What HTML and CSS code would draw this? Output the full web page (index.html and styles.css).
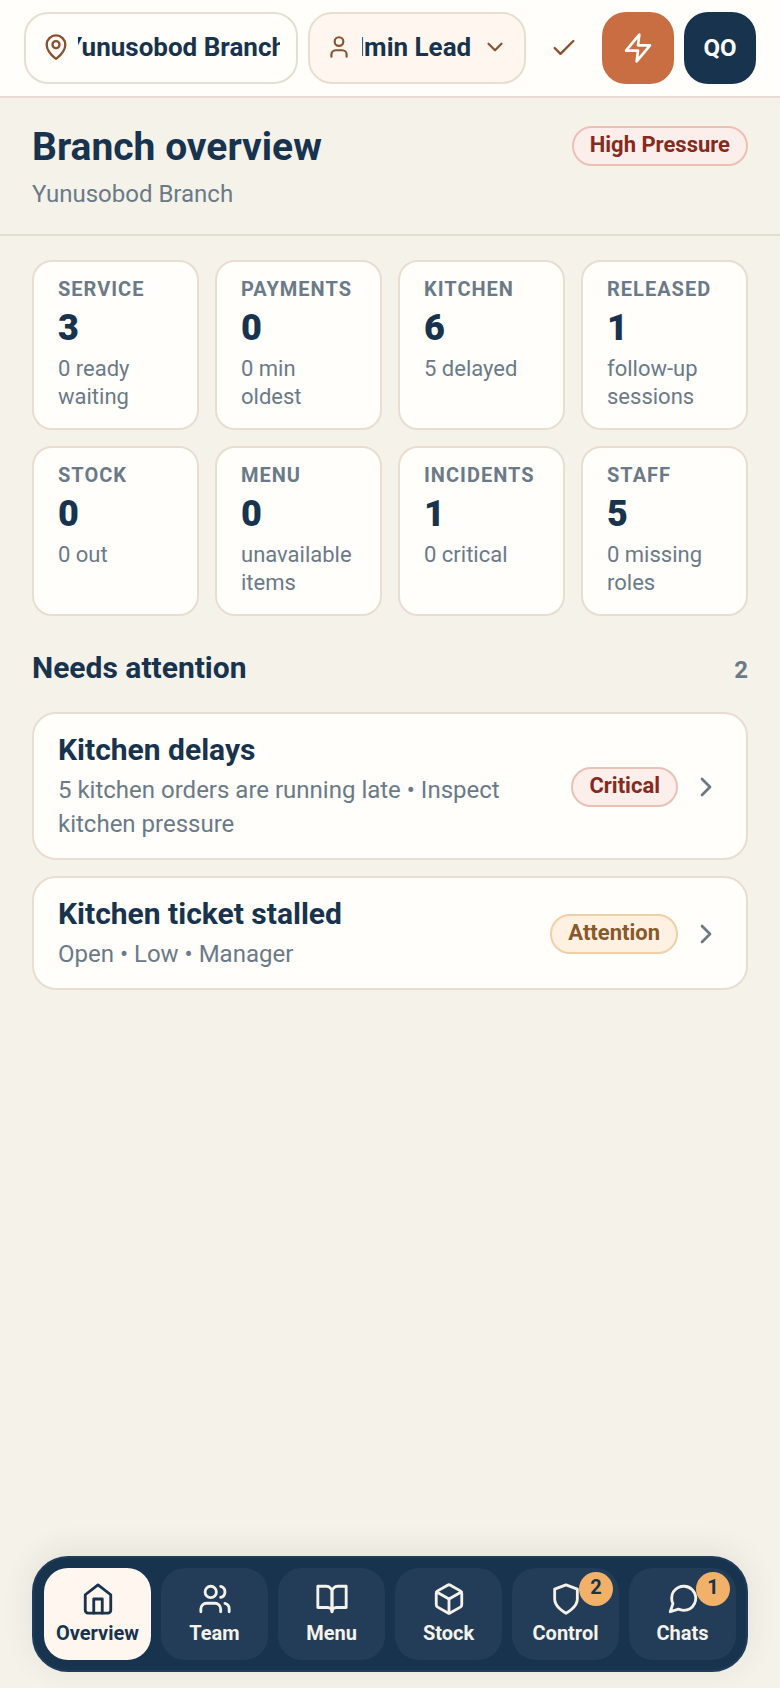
FILE: index.html
```html
<!DOCTYPE html>
<html lang="en">
<head>
<meta charset="utf-8">
<meta name="viewport" content="width=device-width, initial-scale=1">
<title>Branch overview</title>
<link rel="stylesheet" href="styles.css">
</head>
<body>
<header class="topbar">
  <button type="button" class="picker picker-branch">
    <svg class="icon icon-pin" viewBox="0 0 24 24" aria-hidden="true"><path d="M20 10c0 4.99-5.54 10.19-7.4 11.8a1 1 0 0 1-1.2 0C9.54 20.19 4 14.99 4 10a8 8 0 0 1 16 0"/><circle cx="12" cy="10" r="3"/></svg>
    <span class="picker-window picker-window-center"><span class="picker-text">Yunusobod Branch</span></span>
  </button>
  <div class="picker picker-role">
    <svg class="icon icon-user" viewBox="0 0 24 24" aria-hidden="true"><path d="M19 21v-2a4 4 0 0 0-4-4H9a4 4 0 0 0-4 4v2"/><circle cx="12" cy="7" r="4"/></svg>
    <span class="picker-window picker-window-end">
      <select class="picker-text picker-select" aria-label="Role"><option>Admin Lead</option></select>
    </span>
    <svg class="icon icon-user" viewBox="0 0 24 24" aria-hidden="true"><path d="m6 9 6 6 6-6"/></svg>
  </div>
  <button type="button" class="apply" aria-label="Apply">
    <svg class="icon icon-check" viewBox="0 0 24 24" aria-hidden="true"><path d="M20 6 9 17l-5-5"/></svg>
  </button>
  <button type="button" class="tile tile-action" aria-label="Quick actions">
    <svg class="icon icon-zap" viewBox="0 0 24 24" aria-hidden="true"><path d="M13 2 3 14h9l-1 8 10-12h-9z"/></svg>
  </button>
  <button type="button" class="tile tile-user">QO</button>
</header>

<section class="page-head">
  <div>
    <h1 class="page-title">Branch overview</h1>
    <p class="page-sub">Yunusobod Branch</p>
  </div>
  <span class="badge badge-critical">High Pressure</span>
</section>

<main class="content">
  <section class="stats" aria-label="Branch figures">
    <article class="stat"><h2 class="stat-label">Service</h2><p class="stat-value">3</p><p class="stat-note">0 ready waiting</p></article>
    <article class="stat"><h2 class="stat-label">Payments</h2><p class="stat-value">0</p><p class="stat-note">0 min oldest</p></article>
    <article class="stat"><h2 class="stat-label">Kitchen</h2><p class="stat-value">6</p><p class="stat-note">5 delayed</p></article>
    <article class="stat"><h2 class="stat-label">Released</h2><p class="stat-value">1</p><p class="stat-note">follow-up sessions</p></article>
    <article class="stat"><h2 class="stat-label">Stock</h2><p class="stat-value">0</p><p class="stat-note">0 out</p></article>
    <article class="stat"><h2 class="stat-label">Menu</h2><p class="stat-value">0</p><p class="stat-note">unavailable items</p></article>
    <article class="stat"><h2 class="stat-label">Incidents</h2><p class="stat-value">1</p><p class="stat-note">0 critical</p></article>
    <article class="stat"><h2 class="stat-label">Staff</h2><p class="stat-value">5</p><p class="stat-note">0 missing roles</p></article>
  </section>

  <section class="attention">
    <div class="section-head">
      <h2 class="section-title">Needs attention</h2>
      <span class="section-count">2</span>
    </div>
    <a class="alert" href="#kitchen-delays">
      <span class="alert-body">
        <span class="alert-title">Kitchen delays</span>
        <span class="alert-text">5 kitchen orders are running late • Inspect kitchen pressure</span>
      </span>
      <span class="badge badge-critical">Critical</span>
      <svg class="icon icon-chevron" viewBox="0 0 24 24" aria-hidden="true"><path d="m9 18 6-6-6-6"/></svg>
    </a>
    <a class="alert" href="#kitchen-ticket">
      <span class="alert-body">
        <span class="alert-title">Kitchen ticket stalled</span>
        <span class="alert-text">Open • Low • Manager</span>
      </span>
      <span class="badge badge-attention">Attention</span>
      <svg class="icon icon-chevron" viewBox="0 0 24 24" aria-hidden="true"><path d="m9 18 6-6-6-6"/></svg>
    </a>
  </section>
</main>

<nav class="tabs" aria-label="Main">
  <a class="tab tab-active" href="#overview" aria-current="page">
    <svg class="icon icon-tab" viewBox="0 0 24 24" aria-hidden="true"><path d="m3 9 9-7 9 7v11a2 2 0 0 1-2 2H5a2 2 0 0 1-2-2z"/><path d="M9 22V12h6v10"/></svg>
    Overview
  </a>
  <a class="tab" href="#team">
    <svg class="icon icon-tab" viewBox="0 0 24 24" aria-hidden="true"><path d="M16 21v-2a4 4 0 0 0-4-4H6a4 4 0 0 0-4 4v2"/><circle cx="9" cy="7" r="4"/><path d="M22 21v-2a4 4 0 0 0-3-3.87"/><path d="M16 3.13a4 4 0 0 1 0 7.75"/></svg>
    Team
  </a>
  <a class="tab" href="#menu">
    <svg class="icon icon-tab" viewBox="0 0 24 24" aria-hidden="true"><path d="M2 3h6a4 4 0 0 1 4 4v14a3 3 0 0 0-3-3H2z"/><path d="M22 3h-6a4 4 0 0 0-4 4v14a3 3 0 0 1 3-3h7z"/></svg>
    Menu
  </a>
  <a class="tab" href="#stock">
    <svg class="icon icon-tab" viewBox="0 0 24 24" aria-hidden="true"><path d="M21 8a2 2 0 0 0-1-1.73l-7-4a2 2 0 0 0-2 0l-7 4A2 2 0 0 0 3 8v8a2 2 0 0 0 1 1.73l7 4a2 2 0 0 0 2 0l7-4A2 2 0 0 0 21 16z"/><path d="m3.3 7 8.7 5 8.7-5"/><path d="M12 22V12"/></svg>
    Stock
  </a>
  <a class="tab" href="#control">
    <svg class="icon icon-tab" viewBox="0 0 24 24" aria-hidden="true"><path d="M12 22s8-4 8-10V5l-8-3-8 3v7c0 6 8 10 8 10"/></svg>
    Control
    <span class="tab-count">2</span>
  </a>
  <a class="tab" href="#chats">
    <svg class="icon icon-tab" viewBox="0 0 24 24" aria-hidden="true"><path d="M21 11.5a8.38 8.38 0 0 1-.9 3.8 8.5 8.5 0 0 1-7.6 4.7 8.38 8.38 0 0 1-3.8-.9L3 21l1.9-5.7a8.38 8.38 0 0 1-.9-3.8 8.5 8.5 0 0 1 4.7-7.6 8.38 8.38 0 0 1 3.8-.9h.5a8.48 8.48 0 0 1 8 8z"/></svg>
    Chats
    <span class="tab-count">1</span>
  </a>
</nav>
</body>
</html>
```
FILE: styles.css
```css
:root {
  --navy: #18334e;
  --muted: #6b7a88;
  --paper: #fffefb;
  --cream: #fff7ef;
  --page: #f5f2ea;
  --line: #e9ddd0;
  --brown: #885230;
}

* { box-sizing: border-box; }

body {
  display: flex;
  flex-direction: column;
  min-height: 100vh;
  margin: 0;
  background: var(--page);
  color: var(--navy);
  font-family: Roboto, "Liberation Sans", sans-serif;
}

h1, h2, p { margin: 0; }

a { color: inherit; text-decoration: none; }

button, select {
  margin: 0;
  padding: 0;
  border: 0;
  background: none;
  color: inherit;
  font: inherit;
}

.icon {
  flex: none;
  fill: none;
  stroke: currentColor;
  stroke-width: 2;
  stroke-linecap: round;
  stroke-linejoin: round;
}
.icon-pin, .icon-check { width: 28px; height: 28px; }
.icon-user { width: 26px; height: 26px; }
.icon-zap, .icon-chevron { width: 32px; height: 32px; }
.icon-tab { width: 34px; height: 34px; }
.icon-chevron { color: var(--muted); }

/* Top bar */
.topbar {
  display: flex;
  align-items: center;
  gap: 10px;
  padding: 12px 24px;
  border-bottom: 2px solid #e9dbd4;
  background: var(--paper);
}

.picker {
  display: flex;
  align-items: center;
  min-width: 0;
  height: 72px;
  padding: 0 16px 2px;
  border: 2px solid var(--line);
  border-radius: 24px;
  color: var(--brown);
}
.picker-branch { flex: 238 1 0; gap: 8px; background: var(--paper); }
.picker-role { flex: 182 1 0; gap: 10px; background: var(--cream); }

.picker-window {
  display: flex;
  flex: 1;
  min-width: 0;
  overflow: hidden;
}
.picker-window-center { justify-content: center; padding-right: 6px; }
.picker-window-end { justify-content: flex-end; }

.picker-text {
  flex: none;
  color: var(--navy);
  font-size: 26px;
  font-weight: 700;
  line-height: 32px;
  white-space: nowrap;
}
.picker-select { appearance: none; }

.apply {
  display: grid;
  place-items: center;
  width: 56px;
  height: 72px;
  color: var(--brown);
}

.tile {
  display: grid;
  place-items: center;
  width: 72px;
  height: 72px;
  border-radius: 24px;
  color: var(--paper);
  font-size: 24px;
  font-weight: 700;
}
.tile-action { background: #c96d42; }
.tile-user { background: var(--navy); }

/* Page heading */
.page-head {
  display: flex;
  align-items: flex-start;
  justify-content: space-between;
  padding: 28px 32px 22px;
  border-bottom: 2px solid #e4ded1;
}
.page-title { font-size: 39px; font-weight: 700; line-height: 42px; }
.page-sub {
  margin-top: 8px;
  color: var(--muted);
  font-size: 24px;
  line-height: 36px;
}

.badge {
  flex: none;
  height: 40px;
  padding: 0 16px;
  border: 2px solid;
  border-radius: 20px;
  font-size: 22px;
  font-weight: 700;
  line-height: 34px;
}
.badge-critical { border-color: #ecc0b5; background: #fceeea; color: #862a20; }
.badge-attention { border-color: #f0d0a6; background: #fff1e2; color: #87592b; }

/* Figures */
.content { padding: 24px 32px; }

.stats {
  display: grid;
  grid-template-columns: repeat(4, minmax(0, 1fr));
  gap: 16px;
}
.stat {
  display: flex;
  flex-direction: column;
  gap: 3px;
  min-height: 170px;
  padding: 15px 24px;
  border: 2px solid var(--line);
  border-radius: 20px;
  background: var(--paper);
}
.stat-label {
  color: var(--muted);
  font-size: 20px;
  font-weight: 700;
  letter-spacing: 1px;
  line-height: 24px;
  text-transform: uppercase;
}
.stat-value { font-size: 36px; font-weight: 900; line-height: 48px; }
.stat-note { color: var(--muted); font-size: 22px; line-height: 28px; }

/* Alerts */
.attention {
  display: flex;
  flex-direction: column;
  gap: 16px;
  margin-top: 32px;
}
.section-head {
  display: flex;
  align-items: baseline;
  justify-content: space-between;
  margin-bottom: 8px;
}
.section-title { font-size: 30px; font-weight: 700; line-height: 40px; }
.section-count { color: var(--muted); font-size: 24px; font-weight: 700; }

.alert {
  display: flex;
  align-items: center;
  gap: 12px;
  padding: 18px 24px 17px;
  border: 2px solid var(--line);
  border-radius: 24px;
  background: var(--paper);
}
.alert-body {
  display: flex;
  flex: 1;
  flex-direction: column;
  gap: 5px;
}
.alert-title { font-size: 30px; font-weight: 700; line-height: 36px; }
.alert-text { color: var(--muted); font-size: 24px; line-height: 34px; }

/* Bottom tabs */
.tabs {
  display: grid;
  grid-template-columns: repeat(6, minmax(0, 1fr));
  gap: 10px;
  margin: auto 32px 16px;
  padding: 10px;
  border: 2px solid #1f3d5a;
  border-radius: 36px;
  background: var(--navy);
  box-shadow: 0 -4px 32px rgb(60 45 30 / 9%);
}
.tab {
  position: relative;
  display: flex;
  flex-direction: column;
  align-items: center;
  gap: 4px;
  padding: 14px 0;
  border-radius: 24px;
  background: #233d58;
  color: var(--page);
  font-size: 20px;
  font-weight: 700;
  line-height: 26px;
}
.tab-active { background: var(--cream); color: var(--navy); }
.tab-count {
  position: absolute;
  top: 4px;
  right: 6px;
  width: 34px;
  height: 34px;
  border-radius: 50%;
  background: #f2b168;
  color: var(--navy);
  line-height: 30px;
  text-align: center;
}
```
